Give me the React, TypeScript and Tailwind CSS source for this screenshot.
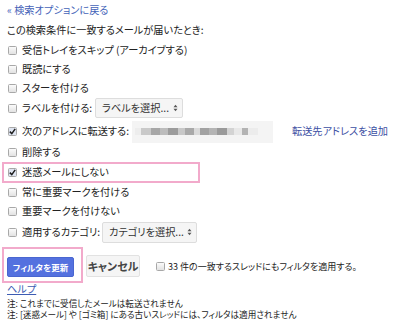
import React from "react";

const font = "[font-family:'Noto_Sans_CJK_JP',sans-serif] [font-feature-settings:'palt']";

function CB({ checked = false }: { checked?: boolean }) {
  return (
    <span
      className={`inline-flex w-[9px] h-[9px] shrink-0 items-center justify-center border border-[#a8a8a8] rounded-[1.5px] ${
        checked ? "bg-[#dfe5f1]" : "bg-gradient-to-b from-[#fbfbfb] to-[#e2e2e2]"
      }`}
    >
      {checked && (
        <svg width="7" height="7" viewBox="0 0 7 7">
          <path d="M0.8 3.6 L2.8 5.6 L6.2 0.9" stroke="#1d1d1d" strokeWidth="1.5" fill="none" />
        </svg>
      )}
    </span>
  );
}

function Arrows() {
  return (
    <svg width="5" height="8" viewBox="0 0 5 8" className="shrink-0">
      <path d="M0.5 3.2 L2.5 0.8 L4.5 3.2 Z" fill="#555" />
      <path d="M0.5 4.8 L2.5 7.2 L4.5 4.8 Z" fill="#555" />
    </svg>
  );
}

function Row({ checked = false, children, h }: { checked?: boolean; children: React.ReactNode; h: string }) {
  return (
    <div className={`flex items-center pl-[8px] whitespace-nowrap ${h}`}>
      <CB checked={checked} />
      <div className="ml-[5px] flex items-center">{children}</div>
    </div>
  );
}

const mosaic = [
  ["#ededed", 6],
  ["#c9c9c9", 10],
  ["#a7a7a7", 9],
  ["#bcbcbc", 8],
  ["#9c9c9c", 10],
  ["#c8c8c8", 7],
  ["#a9a9a9", 9],
  ["#dadada", 6],
  ["#a2a2a2", 9],
  ["#b4b4b4", 8],
  ["#9a9a9a", 10],
  ["#d3d3d3", 7],
  ["#e8e8e8", 8],
  ["#b3b3b3", 6],
  ["#ececec", 10],
] as const;

export default function App() {
  return (
    <div className={`w-[400px] h-[322px] bg-white text-[#222] text-[10.2px] leading-none overflow-hidden ${font}`}>
      <div className="h-[20px] flex items-center pl-[7px] text-[#4463b8]">« 検索オプションに戻る</div>
      <div className="h-[20px] flex items-center pl-[7px]">この検索条件に一致するメールが届いたとき:</div>
      <Row h="h-[20px]">受信トレイをスキップ (アーカイブする)</Row>
      <Row h="h-[19px]">既読にする</Row>
      <Row h="h-[19px]">スターを付ける</Row>
      <Row h="h-[20px]">
        <span className="w-[73px] shrink-0">ラベルを付ける:</span>
        <div className="h-[20px] w-[88px] flex items-center justify-between pl-[6px] pr-[4px] bg-[#f5f5f5] border border-[#dddddd] rounded-[2px] text-[#333]">
          <span>ラベルを選択...</span>
          <Arrows />
        </div>
      </Row>
      <div className="h-[3px]" />
      <Row checked h="h-[21px]">
        <span className="w-[110px] shrink-0">次のアドレスに転送する:</span>
        <div className="h-[22px] w-[141px] shrink-0 bg-[#f4f4f4] flex items-center pl-[3px] blur-[0.6px]">
          <div className="flex h-[7px]">
            {mosaic.map(([c, w], i) => (
              <div key={i} style={{ background: c, width: w }} className="h-full" />
            ))}
          </div>
        </div>
        <span className="ml-[19px] text-[#3b4fa3]">転送先アドレスを追加</span>
      </Row>
      <Row h="h-[20px]">削除する</Row>
      <div className="ml-[2px] w-[198px] h-[21px] border-2 border-[#f2aacb] flex items-center pl-[4px]">
        <CB checked />
        <span className="ml-[5px]">迷惑メールにしない</span>
      </div>
      <Row h="h-[19px]">常に重要マークを付ける</Row>
      <Row h="h-[19px]">重要マークを付けない</Row>
      <Row h="h-[22px]">
        <span className="w-[80px] shrink-0">適用するカテゴリ:</span>
        <div className="h-[21px] w-[95px] flex items-center justify-between pl-[6px] pr-[4px] bg-[#f5f5f5] border border-[#dddddd] rounded-[2px] text-[#333]">
          <span>カテゴリを選択...</span>
          <Arrows />
        </div>
      </Row>
      <div className="mt-[4px] h-[36px] flex items-start whitespace-nowrap">
        <div className="ml-[2px] w-[81px] h-[36px] shrink-0 border-2 border-[#f2aacb] pl-[3px] pt-[8px]">
          <div className="w-[67px] h-[20px] rounded-[2px] bg-[#5471df] border border-[#4a66d0] flex items-center justify-center text-white font-bold text-[8.5px]">
            フィルタを更新
          </div>
        </div>
        <div className="ml-[3px] mt-[8px] w-[54px] h-[22px] shrink-0 rounded-[2px] bg-[#f5f5f5] border border-[#e2e2e2] flex items-center justify-center font-bold text-[11px] text-[#444]">
          キャンセル
        </div>
        <div className="ml-[16px] mt-[15px] flex items-center">
          <CB />
          <span className="ml-[3px] text-[9px]">33 件の一致するスレッドにもフィルタを適用する。</span>
        </div>
      </div>
      <div className="pl-[7px] h-[11px] leading-[11px] text-[#3d5cb2] underline">ヘルプ</div>
      <div className="pl-[7px] pt-[4px] leading-[11px] text-[8.6px] whitespace-nowrap">
        <div>注: これまでに受信したメールは転送されません</div>
        <div>注: [迷惑メール] や [ゴミ箱] にある古いスレッドには、フィルタは適用されません</div>
      </div>
    </div>
  );
}
